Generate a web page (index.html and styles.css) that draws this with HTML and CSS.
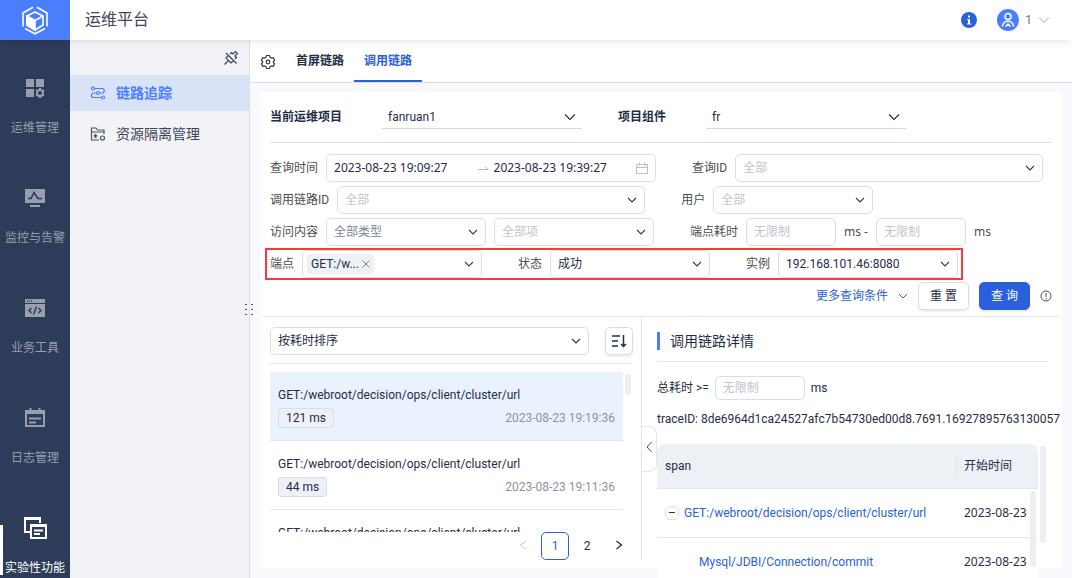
FILE: index.html
```html
<!DOCTYPE html>
<html lang="zh-CN">
<head>
    <meta charset="UTF-8">
    <meta name="viewport" content="width=device-width, initial-scale=1.0">
    <title>运维平台</title>
    <link rel="stylesheet" href="styles.css">
</head>
<body>

<header class="topbar">
    <a class="logo" href="#" aria-label="运维平台">
        <svg width="28" height="30" viewBox="0 0 28 30" fill="none" stroke="#fff" stroke-width="1.6">
            <path d="M12 2.2 2 8v13.5M16 2.2 26 8v13.5M4 23.5l10 5.3 10-5.3M14 28.8"/>
            <path d="M14 7 6 11v9l8 5 8-5v-9z"/>
            <path d="M6 11l8 4.500v9.500l-8-5z" fill="#fff"/>
            <path d="M14 15.500 22 11"/>
        </svg>
    </a>
    <h1>运维平台</h1>
    <div class="user">
        <svg width="16" height="16" viewBox="0 0 16 16"><circle cx="8" cy="8" r="8" fill="#2b60dc"/><path d="M7 3.500h2v2H7zM6 7h3v4.500h1.200v1H6v-1h1V8H6z" fill="#fff"/></svg>
        <button class="account">
            <svg width="22" height="22" viewBox="0 0 22 22"><circle cx="11" cy="11" r="11" fill="#4b7eff"/><g fill="none" stroke="#fff" stroke-width="1.500"><circle cx="11" cy="7.500" r="3"/><path d="M5.500 17.500c0-7 11-7 11 0M8.500 17.500l2.500-2.500 2.500 2.500"/></g></svg>
            <span>1</span>
            <svg width="12" height="8" viewBox="0 0 12 8" fill="none" stroke="#a0a7b4"><path d="M1 1.500 6 6.500 11 1.500"/></svg>
        </button>
    </div>
</header>

<div class="layout">
    <nav class="sidebar">
        <a href="#">
            <svg width="22" height="22" viewBox="0 0 22 22" fill="#979ead"><path d="M2 2h8v8H2zM12 2h8v8h-8zM2 12h8v8H2z"/><circle cx="16" cy="16" r="3" fill="none" stroke="#979ead" stroke-width="2"/><path d="M15 11h2v2h-2zM15 19h2v2h-2zM11.500 14l1-1.500 1.500 1-1 1.500zM18 18.500l1-1.500 1.500 1-1 1.500zM11.500 18l1.500-1 1 1.500-1.500 1zM18 13.500l1.500-1 1 1.500-1.500 1z"/></svg>
            <span>运维管理</span>
        </a>
        <a href="#">
            <svg width="22" height="22" viewBox="0 0 22 22"><path d="M1 2h20v14H1zM6 18h10v2H6z" fill="#979ead"/><path d="M4 11.500h3l3-6 4 6h4" fill="none" stroke="#2d3c58" stroke-width="1.600"/></svg>
            <span>监控与告警</span>
        </a>
        <a href="#">
            <svg width="22" height="22" viewBox="0 0 22 22"><path d="M1 2h20v4H1zM1 7h20v13H1z" fill="#979ead"/><path d="M3 4h1M5 4h1M7 4h1M7.500 11 5 13.500 7.500 16M14.500 11l2.500 2.500-2.500 2.500M12.500 9.500l-3 8" fill="none" stroke="#2d3c58" stroke-width="1.400"/></svg>
            <span>业务工具</span>
        </a>
        <a href="#">
            <svg width="22" height="22" viewBox="0 0 22 22" fill="none" stroke="#979ead" stroke-width="2"><path d="M2 4h18v15H2zM2 6h18M6.500 1v4M15.500 1v4M5 11.500h12M5 15.500h7"/></svg>
            <span>日志管理</span>
        </a>
        <a class="active" href="#">
            <svg width="24" height="24" viewBox="0 0 24 24" fill="none" stroke="#fff" stroke-width="2"><path d="M7 16H2V2h15v5M1 3h17M8 9h15v13H8zM8 10h15M11 14.500h9M11 18h6"/></svg>
            <span>实验性功能</span>
        </a>
    </nav>

    <aside class="submenu">
        <button class="pin" aria-label="取消固定">
            <svg width="16" height="16" viewBox="0 0 16 16" fill="none" stroke="#3c4658" stroke-width="1.200"><path d="M7 4l1.500-1.500L10 4l2.500-2.500 2 2L12 6l1.500 1.500L12 9M10.500 10.500 8 13l-5-5 2.500-2.500M5 11l-3.500 3.500M3 3l10.500 10.500"/></svg>
        </button>
        <a class="selected" href="#">
            <svg width="16" height="14" viewBox="0 0 16 14" fill="none" stroke="#4b7eff" stroke-width="1.200"><circle cx="3" cy="2.500" r="1.500"/><circle cx="13" cy="11.500" r="1.500"/><circle cx="8" cy="7" r="1.500"/><path d="M4.500 2.500H12c3 0 3 4.500 0 4.500H9.500M6.500 7H4c-3.500 0-3.500 4.500 0 4.500h7.500"/></svg>
            <span>链路追踪</span>
        </a>
        <a href="#">
            <svg width="16" height="14" viewBox="0 0 16 14" fill="none" stroke="#4b5567" stroke-width="1.200"><path d="M9 13H1.500V1H6l1.500 2h6.500v4M1.500 5H14M5.500 7v4M3.800 8l3.400 2M7.200 8 3.800 10"/><circle cx="12.500" cy="11" r="2"/></svg>
            <span>资源隔离管理</span>
        </a>
        <div class="drag"></div>
    </aside>

    <main class="main">
        <div class="tabs">
            <button class="gear" aria-label="设置">
                <svg width="16" height="16" viewBox="0 0 16 16" fill="none" stroke="#333c4d" stroke-width="1.200" stroke-linejoin="round"><path d="M6.500 1.500h3l.5 1.700 1.500.9 1.700-.5 1.500 2.600L13.400 7.500v1l1.300 1.300-1.500 2.600-1.700-.5-1.500.9-.5 1.700h-3L6 12.800l-1.500-.9-1.700.5-1.500-2.600L2.600 8.500v-1L1.300 6.200l1.500-2.600 1.700.5L6 3.200z"/><circle cx="8" cy="8" r="1.800"/></svg>
            </button>
            <button class="tab">首屏链路</button>
            <button class="tab current">调用链路</button>
        </div>

        <section class="card">
            <div class="project">
                <label for="project">当前运维项目</label>
                <select id="project"><option>fanruan1</option></select>
                <label for="component">项目组件</label>
                <select id="component"><option>fr</option></select>
            </div>

            <form class="filters">
                <div class="row">
                    <div class="field">
                        <label for="timeStart">查询时间</label>
                        <div class="box range">
                            <input type="text" id="timeStart" value="2023-08-23 19:09:27">
                            <svg width="12" height="8" viewBox="0 0 12 8" fill="none" stroke="#b3bac6"><path d="M1 5.500h10L8 2.500"/></svg>
                            <input type="text" id="timeEnd" aria-label="结束时间" value="2023-08-23 19:39:27">
                            <svg width="12" height="12" viewBox="0 0 12 12" fill="none" stroke="#b9bfca"><path d="M.5 2.500h11v9H.5zM.5 5.500h11M3.500.5v3M8.500.5v3"/></svg>
                        </div>
                    </div>
                    <div class="field">
                        <label for="queryId">查询ID</label>
                        <select id="queryId" class="box long empty"><option>全部</option></select>
                    </div>
                </div>
                <div class="row">
                    <div class="field">
                        <label for="traceId">调用链路ID</label>
                        <select id="traceId" class="box long empty"><option>全部</option></select>
                    </div>
                    <div class="field">
                        <label for="userName">用户</label>
                        <select id="userName" class="box empty"><option>全部</option></select>
                    </div>
                </div>
                <div class="row">
                    <div class="field">
                        <label for="visitType">访问内容</label>
                        <select id="visitType" class="box muted"><option>全部类型</option></select>
                        <select id="visitItem" class="box empty" aria-label="访问项"><option>全部项</option></select>
                    </div>
                    <div class="field">
                        <label for="costMin">端点耗时</label>
                        <input type="text" id="costMin" class="box short" placeholder="无限制">
                        <span class="unit">ms -</span>
                        <input type="text" id="costMax" class="box short" aria-label="最大耗时" placeholder="无限制">
                        <span class="unit">ms</span>
                    </div>
                </div>
                <div class="row marked">
                    <div class="field">
                        <label for="endpoint">端点</label>
                        <div class="box tags">
                            <span class="tag">GET:/w...<button type="button" aria-label="移除"><svg width="8" height="8" viewBox="0 0 8 8" stroke="#7c8596"><path d="M.5.5l7 7M7.500.5l-7 7"/></svg></button></span>
                            <input type="text" id="endpoint">
                        </div>
                    </div>
                    <div class="field">
                        <label for="status">状态</label>
                        <select id="status" class="box"><option>成功</option></select>
                    </div>
                    <div class="field">
                        <label for="instance">实例</label>
                        <select id="instance" class="box medium"><option>192.168.101.46:8080</option></select>
                    </div>
                </div>
                <div class="actions">
                    <a class="more" href="#">更多查询条件
                        <svg width="10" height="6" viewBox="0 0 10 6" fill="none" stroke="#2b60dc"><path d="M1 1l4 4 4-4"/></svg>
                    </a>
                    <button type="reset" class="btn">重 置</button>
                    <button type="submit" class="btn primary">查 询</button>
                    <svg width="12" height="12" viewBox="0 0 12 12" fill="none" stroke="#4d4d4d"><circle cx="6" cy="6" r="5"/><path d="M6 3v4M6 8v1.200"/></svg>
                </div>
            </form>

            <div class="split">
                <div class="traces">
                    <div class="sort">
                        <select class="box" aria-label="排序"><option>按耗时排序</option></select>
                        <button class="btn icon" aria-label="降序">
                            <svg width="16" height="14" viewBox="0 0 16 14" fill="none" stroke="#1f2d47" stroke-width="1.500"><path d="M1 2h8M1 7h6M1 12h6M12.500 1v11.500M10 10l2.500 2.500L15 10"/></svg>
                        </button>
                    </div>
                    <ul class="list">
                        <li class="selected">
                            <p>GET:/webroot/decision/ops/client/cluster/url</p>
                            <div><span class="cost">121 ms</span><time>2023-08-23 19:19:36</time></div>
                        </li>
                        <li>
                            <p>GET:/webroot/decision/ops/client/cluster/url</p>
                            <div><span class="cost">44 ms</span><time>2023-08-23 19:11:36</time></div>
                        </li>
                        <li>
                            <p>GET:/webroot/decision/ops/client/cluster/url</p>
                        </li>
                    </ul>
                    <div class="pager">
                        <button aria-label="上一页" disabled><svg width="8" height="10" viewBox="0 0 8 10" fill="none" stroke="#c3c8d1"><path d="M7 1 1 5l6 4"/></svg></button>
                        <button class="current">1</button>
                        <button>2</button>
                        <button aria-label="下一页"><svg width="8" height="10" viewBox="0 0 8 10" fill="none" stroke="#1f2d47" stroke-width="1.300"><path d="M1.500 1 6.500 5l-5 4"/></svg></button>
                    </div>
                </div>

                <div class="detail">
                    <button class="collapse" aria-label="收起"><svg width="6" height="12" viewBox="0 0 6 12" fill="none" stroke="#4d4d4d"><path d="M5.500 1 1 6l4.500 5"/></svg></button>
                    <h2>调用链路详情</h2>
                    <div class="total">
                        <label for="total">总耗时 &gt;=</label>
                        <input type="text" id="total" class="box short" placeholder="无限制">
                        <span>ms</span>
                    </div>
                    <p class="trace-id">traceID: 8de6964d1ca24527afc7b54730ed00d8.7691.16927895763130057</p>
                    <div class="spans">
                        <table>
                            <thead>
                                <tr><th>span</th><th class="start">开始时间</th></tr>
                            </thead>
                            <tbody>
                                <tr>
                                    <td><button class="fold" aria-label="折叠">–</button><a href="#">GET:/webroot/decision/ops/client/cluster/url</a></td>
                                    <td class="date">2023-08-23</td>
                                </tr>
                                <tr>
                                    <td class="child"><a href="#">Mysql/JDBI/Connection/commit</a></td>
                                    <td class="date">2023-08-23</td>
                                </tr>
                            </tbody>
                        </table>
                    </div>
                </div>
            </div>
        </section>
    </main>
</div>

</body>
</html>
```

FILE: styles.css
```css
* {
    box-sizing: border-box;
}
body {
    margin: 0;
    height: 100vh;
    display: flex;
    flex-direction: column;
    overflow: hidden;
    font-family: Roboto, "Noto Sans CJK SC", sans-serif;
    font-size: 12px;
    line-height: 18px;
    color: #1f2d47;
    background-color: #f8f9fd;
}
button, input, select {
    font: inherit;
    color: inherit;
}
button {
    padding: 0;
    border: none;
    background: none;
    cursor: pointer;
}
a {
    color: #2b60dc;
    text-decoration: none;
}
svg {
    flex: none;
}
h1, h2, p, ul {
    margin: 0;
    padding: 0;
    font-weight: normal;
}

/* top bar */
.topbar {
    position: relative;
    z-index: 2;
    flex: none;
    display: flex;
    align-items: center;
    height: 40px;
    background-color: #fff;
    box-shadow: 0 1px 8px rgba(31, 45, 71, 0.12);
}
.logo {
    display: flex;
    align-items: center;
    justify-content: center;
    width: 70px;
    height: 40px;
    background-color: #4b7eff;
}
.topbar h1 {
    flex: 1;
    padding-left: 15px;
    font-size: 16px;
    color: #3c4658;
}
.user, .account {
    display: flex;
    align-items: center;
}
.user {
    gap: 20px;
    padding-right: 22px;
}
.account {
    gap: 6px;
    color: #6b7484;
}

.layout {
    flex: 1;
    display: flex;
    min-height: 0;
}

/* left navigation */
.sidebar {
    flex: none;
    width: 70px;
    padding-top: 15px;
    background-color: #2d3c58;
}
.sidebar a {
    position: relative;
    display: flex;
    flex-direction: column;
    align-items: center;
    height: 110px;
    padding-top: 21px;
    color: #979ead;
    white-space: nowrap;
}
.sidebar svg {
    height: 24px;
    margin-bottom: 19px;
}
.sidebar a.active {
    color: #fff;
}
.sidebar a.active::before {
    content: "";
    position: absolute;
    left: 0;
    top: 30px;
    width: 3px;
    height: 50px;
    background-color: #fff;
}

.submenu {
    position: relative;
    flex: none;
    display: flex;
    flex-direction: column;
    width: 180px;
    border-right: 1px solid #dcdfe7;
    background-color: #f2f3f7;
}
.pin {
    align-self: flex-end;
    display: flex;
    align-items: center;
    height: 35px;
    padding-right: 10px;
}
.submenu a {
    display: flex;
    align-items: center;
    gap: 10px;
    height: 36px;
    margin-bottom: 5px;
    padding-left: 20px;
    font-size: 14px;
    color: #3c4658;
}
.submenu a.selected {
    background-color: #d9e3f8;
    font-weight: bold;
    color: #4b7eff;
}
.drag {
    position: absolute;
    right: -6px;
    top: 262px;
    width: 12px;
    height: 15px;
    background-image: radial-gradient(circle, #4b5567 1px, transparent 1px);
    background-size: 6px 5px;
}

/* main area */
.main {
    flex: 1;
    display: flex;
    flex-direction: column;
    min-width: 0;
}
.tabs {
    flex: none;
    display: flex;
    height: 43px;
    padding-left: 10px;
    border-bottom: 1px solid #dcdfe7;
    background-color: #fff;
}
.gear {
    display: flex;
    align-items: center;
    margin-right: 10px;
    padding-top: 2px;
}
.tab {
    padding: 2px 10px 0;
    border-bottom: 2px solid transparent;
    font-weight: bold;
}
.tab.current {
    border-color: #2b60dc;
    color: #2b60dc;
}
.card {
    flex: 1;
    display: flex;
    flex-direction: column;
    min-height: 0;
    margin: 9px 10px 10px;
    background-color: #fff;
}
.project {
    flex: none;
    display: flex;
    align-items: center;
    height: 51px;
    margin: 0 10px;
    border-bottom: 1px solid #dcdfe7;
}
.project label {
    margin-right: 40px;
    font-weight: bold;
}
.project select {
    width: 200px;
    height: 24px;
    margin-right: 36px;
    padding: 0 6px;
    border: none;
    border-bottom: 1px solid #d4d8e0;
}
select {
    appearance: none;
    background: #fff url("data:image/svg+xml,%3Csvg xmlns='http://www.w3.org/2000/svg' width='12' height='8' fill='none' stroke='%231f2d47' stroke-width='1.1'%3E%3Cpath d='M1 1.500l5 5 5-5'/%3E%3C/svg%3E") no-repeat right 6px center;
}

/* form controls */
.box {
    width: 160px;
    height: 28px;
    padding: 0 7px;
    border: 1px solid #dadde6;
    border-radius: 5px;
    outline: none;
    background-color: #fff;
}
select.box, .tags {
    background-image: url("data:image/svg+xml,%3Csvg xmlns='http://www.w3.org/2000/svg' width='10' height='6' fill='none' stroke='%232d3c58' stroke-width='1.1'%3E%3Cpath d='M1 1l4 4 4-4'/%3E%3C/svg%3E");
    background-repeat: no-repeat;
    background-position: right 7px center;
}
.box.long {
    width: 308px;
}
.box.medium {
    width: 180px;
}
.box.short {
    width: 90px;
}
.box.empty, .box::placeholder {
    color: #bfc4ce;
}
.box.muted {
    color: #7c8596;
}

/* filters */
.filters {
    flex: none;
    display: flex;
    flex-direction: column;
    gap: 4px;
    margin: 0 2px;
    padding: 11px 8px 6px;
    border-bottom: 1px solid #e4e6ec;
}
.row {
    display: flex;
    gap: 36px;
}
.field {
    display: flex;
    align-items: center;
    gap: 8px;
    color: #4d4d4d;
    white-space: nowrap;
}
.field .box {
    color: #1f2d47;
}
.field .box.empty {
    color: #bfc4ce;
}
.field .box.muted {
    color: #7c8596;
}
.row.marked {
    align-self: flex-start;
    margin: -2px 0 -2px -5px;
    padding: 0 3px;
    border: 2px solid #f33b41;
}
.range {
    display: flex;
    align-items: center;
    width: 330px;
    font-family: "Noto Sans", sans-serif;
}
.range input {
    flex: 1;
    min-width: 0;
    padding: 0;
    border: none;
    outline: none;
    background: none;
}
.range input + svg {
    margin-right: 5px;
}
.range input:last-of-type + svg {
    margin-right: 0;
}
.tags {
    display: flex;
    align-items: center;
    width: 180px;
    padding: 0 4px;
}
.tags input {
    width: 60px;
    border: none;
    outline: none;
    background: none;
}
.tag {
    display: flex;
    align-items: center;
    gap: 3px;
    height: 20px;
    padding: 0 4px;
    border-radius: 3px;
    background-color: #edf0f5;
}
.unit {
    font-family: "Noto Sans", sans-serif;
}
.actions {
    display: flex;
    align-items: center;
    justify-content: flex-end;
    gap: 10px;
}
.more {
    display: flex;
    align-items: center;
    gap: 10px;
}
.btn {
    height: 28px;
    padding: 0 11px;
    border: 1px solid #dadde6;
    border-radius: 5px;
    background-color: #fff;
    box-shadow: 0 2px 2px rgba(31, 45, 71, 0.08);
}
.btn.primary {
    border-color: #2b60dc;
    background-color: #2b60dc;
    color: #fff;
}
.btn.icon {
    display: flex;
    align-items: center;
    padding: 0 5px;
}

.split {
    flex: 1;
    display: flex;
    min-height: 0;
}

/* trace list */
.traces {
    flex: none;
    display: flex;
    flex-direction: column;
    width: 382px;
    margin-bottom: 8px;
    padding: 10px 8px 0 10px;
    border-right: 1px solid #e4e6ec;
}
.sort {
    display: flex;
    gap: 16px;
    padding-bottom: 8px;
    border-bottom: 1px solid #e4e6ec;
}
.sort .box {
    flex: 1;
}
.list {
    position: relative;
    flex: 1;
    min-height: 0;
    margin-top: 8px;
    padding-right: 10px;
    overflow: hidden;
    list-style: none;
}
.list::after {
    content: "";
    position: absolute;
    right: 2px;
    top: 2px;
    width: 6px;
    height: 21px;
    border-radius: 3px;
    background-color: #edeff3;
}
.list li {
    height: 69px;
    padding: 14px 8px 0;
    border-bottom: 1px solid #e4e6ec;
}
.list li.selected {
    background-color: #eaf2ff;
}
.list div {
    display: flex;
    align-items: center;
    justify-content: space-between;
    margin-top: 4px;
}
.list time {
    color: #8b93a2;
}
.cost {
    height: 20px;
    padding: 0 7px;
    border: 1px solid #dadde6;
    border-radius: 3px;
    background-color: #edf0f5;
}
.pager {
    display: flex;
    justify-content: flex-end;
    gap: 4px;
}
.pager button {
    width: 28px;
    height: 28px;
}
.pager .current {
    border: 1px solid #2b60dc;
    border-radius: 5px;
    color: #2b60dc;
}

/* trace detail */
.detail {
    position: relative;
    flex: 1;
    min-width: 0;
    padding: 0 14px 0 15px;
}
.collapse {
    position: absolute;
    left: 0;
    top: 109px;
    width: 15px;
    height: 46px;
    border: 1px solid #e4e6ec;
    border-left: none;
    border-radius: 0 8px 8px 0;
}
.detail h2 {
    display: flex;
    align-items: center;
    gap: 10px;
    height: 45px;
    padding-top: 4px;
    border-bottom: 1px solid #e4e6ec;
    font-size: 14px;
}
.detail h2::before {
    content: "";
    width: 3px;
    height: 18px;
    background-color: #4b7eff;
}
.total {
    display: flex;
    align-items: center;
    gap: 6px;
    padding-top: 14px;
}
.total .box {
    height: 24px;
}
.trace-id {
    padding: 10px 0 16px;
    white-space: nowrap;
}
.spans {
    position: relative;
    padding-right: 10px;
}
.spans::before, .spans::after {
    content: "";
    position: absolute;
    width: 6px;
    border-radius: 3px;
    background-color: #edeff3;
}
.spans::before {
    right: 2px;
    top: 2px;
    height: 97px;
}
.spans::after {
    right: 12px;
    top: 47px;
    height: 76px;
}
.spans table {
    width: 100%;
    border-collapse: separate;
    border-spacing: 0;
    background-color: #fff;
}
.spans th, .spans td {
    height: 49px;
    padding: 0 8px;
    border-bottom: 1px solid #e4e6ec;
    text-align: left;
    white-space: nowrap;
}
.spans th {
    height: 45px;
    background-color: #edf0f5;
    font-weight: normal;
}
.spans th:first-child {
    border-top-left-radius: 8px;
}
.spans th.start {
    width: 82px;
    border-top-right-radius: 8px;
    background-image: linear-gradient(#dfe3ea, #dfe3ea);
    background-size: 1px 20px;
    background-position: left center;
    background-repeat: no-repeat;
}
.spans td.date {
    font-family: "Noto Sans", sans-serif;
}
.spans td.child {
    padding-left: 42px;
}
.fold {
    width: 14px;
    height: 14px;
    margin-right: 5px;
    border: 1px solid #dadde6;
    border-radius: 5px;
    line-height: 10px;
}
```
